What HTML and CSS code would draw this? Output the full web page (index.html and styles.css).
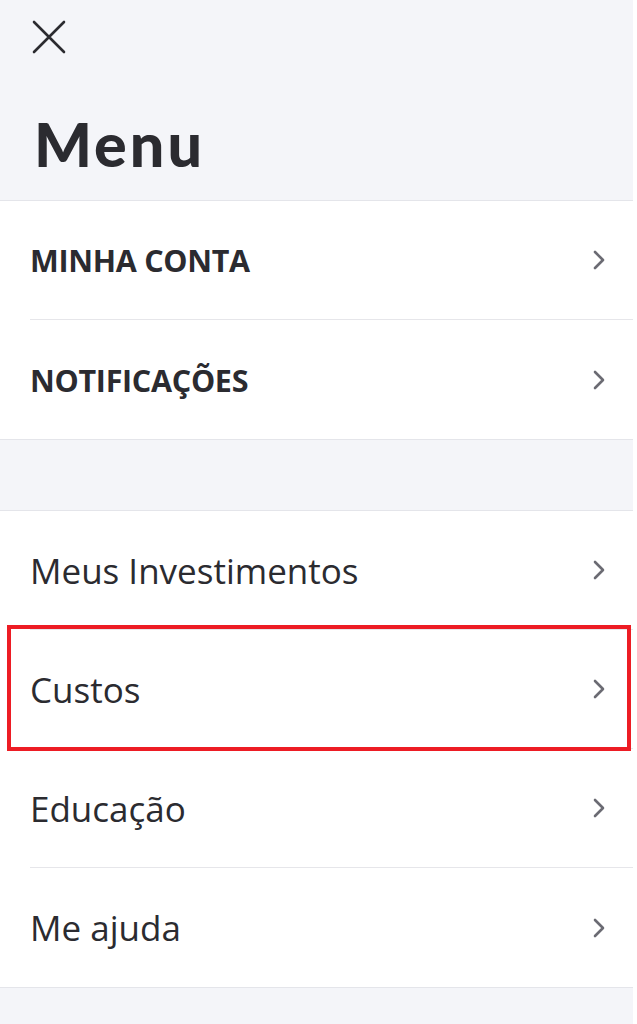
FILE: index.html
```html
<!DOCTYPE html>
<html lang="pt-BR">
<head>
    <meta charset="UTF-8">
    <meta name="viewport" content="width=device-width, initial-scale=1.0">
    <title>Menu</title>
    <link rel="stylesheet" href="styles.css">
</head>
<body>

    <div class="menu">
        <!-- Cabeçalho -->
        <div class="menu-header">
            <a href="#" class="close-btn" aria-label="Fechar">
                <svg width="34" height="34" viewBox="0 0 34 34">
                    <path d="M2 2 L32 32 M32 2 L2 32" stroke="#2b2b30" stroke-width="2.6" stroke-linecap="round" fill="none"/>
                </svg>
            </a>
            <h1>Menu</h1>
        </div>

        <!-- Conta -->
        <div class="menu-section">
            <a href="#" class="menu-item strong">
                <span class="item-inner">
                    <span>MINHA CONTA</span>
                    <svg class="chevron" width="14" height="22" viewBox="0 0 14 22"><path d="M3 3 L11 11 L3 19" /></svg>
                </span>
            </a>
            <a href="#" class="menu-item strong">
                <span class="item-inner">
                    <span>NOTIFICAÇÕES</span>
                    <svg class="chevron" width="14" height="22" viewBox="0 0 14 22"><path d="M3 3 L11 11 L3 19" /></svg>
                </span>
            </a>
        </div>

        <div class="menu-gap"></div>

        <!-- Navegação -->
        <div class="menu-section">
            <a href="#" class="menu-item">
                <span class="item-inner">
                    <span>Meus Investimentos</span>
                    <svg class="chevron" width="14" height="22" viewBox="0 0 14 22"><path d="M3 3 L11 11 L3 19" /></svg>
                </span>
            </a>
            <a href="#" class="menu-item highlight">
                <span class="item-inner">
                    <span>Custos</span>
                    <svg class="chevron" width="14" height="22" viewBox="0 0 14 22"><path d="M3 3 L11 11 L3 19" /></svg>
                </span>
            </a>
            <a href="#" class="menu-item">
                <span class="item-inner">
                    <span>Educação</span>
                    <svg class="chevron" width="14" height="22" viewBox="0 0 14 22"><path d="M3 3 L11 11 L3 19" /></svg>
                </span>
            </a>
            <a href="#" class="menu-item">
                <span class="item-inner">
                    <span>Me ajuda</span>
                    <svg class="chevron" width="14" height="22" viewBox="0 0 14 22"><path d="M3 3 L11 11 L3 19" /></svg>
                </span>
            </a>
        </div>

        <div class="menu-footer"></div>
    </div>

</body>
</html>
```

FILE: styles.css
```css
body {
    margin: 0;
    padding: 0;
    background-color: #fff;
    font-family: "Open Sans", "Noto Sans", sans-serif;
    color: #2b2b30;
}

.menu {
    width: 633px;
    min-height: 1024px;
    background-color: #f4f5f9;
}

/* Cabeçalho */
.menu-header {
    height: 201px;
    box-sizing: border-box;
    padding: 20px 0 0 32px;
    border-bottom: 1px solid #e4e5ea;
}

.close-btn {
    display: block;
    width: 34px;
    height: 34px;
}

.close-btn svg {
    display: block;
}

.menu-header h1 {
    margin: 55px 0 0 2px;
    font-family: Lato, sans-serif;
    font-weight: 900;
    font-size: 61px;
    line-height: 70px;
    letter-spacing: 3px;
    color: #2b2b30;
}

/* Secciones */
.menu-section {
    background-color: #fff;
    border-top: 1px solid #e4e5ea;
    border-bottom: 1px solid #e4e5ea;
}

.menu-header + .menu-section {
    border-top: none;
}

.menu-gap {
    height: 70px;
}

.menu-item {
    display: block;
    padding-left: 30px;
    color: #2b2b30;
    text-decoration: none;
    font-size: 35px;
}

.item-inner {
    display: flex;
    align-items: center;
    justify-content: space-between;
    height: 118px;
    padding-right: 27px;
    border-bottom: 1px solid #e6e6ea;
}

.menu-item:last-child .item-inner {
    border-bottom: none;
    height: 119px;
}

.menu-item.strong {
    font-size: 30.5px;
    font-weight: 700;
    letter-spacing: -0.3px;
}

.chevron path {
    fill: none;
    stroke: #6b6b73;
    stroke-width: 2.6;
    stroke-linecap: round;
    stroke-linejoin: round;
}

/* Marca roja sobre "Custos" */
.highlight {
    position: relative;
}

.highlight::after {
    content: "";
    position: absolute;
    left: 7px;
    right: 2px;
    top: -5px;
    bottom: -2px;
    border: 4px solid #ed1c24;
}
```
